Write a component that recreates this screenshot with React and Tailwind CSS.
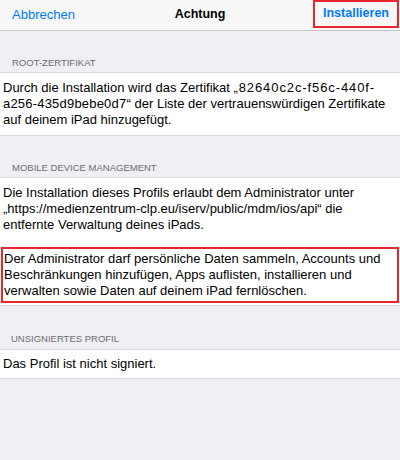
export default function App() {
  return (
    <div className="h-[460px] w-full overflow-hidden bg-[#efeff4] font-['Liberation_Sans',Arial,sans-serif] text-black">
      {/* nav bar */}
      <div className="relative flex h-[31px] items-start border-b border-[#c8c7cc] bg-[#f7f7f7]">
        <button className="pl-[12px] pt-[7px] text-[13px] leading-[15px] text-[#007aff]">
          Abbrechen
        </button>
        <div className="absolute left-0 right-0 top-[7px] text-center text-[12.5px] font-bold leading-[15px]">
          Achtung
        </div>
        <button className="ml-auto mr-[1px] flex h-[28px] w-[86px] items-center justify-center border-2 border-[#e8262d] pb-[1px] text-[12.5px] font-bold text-[#007aff]">
          Installieren
        </button>
      </div>

      {/* root-zertifikat */}
      <div className="flex h-[41px] items-end px-[12px] pb-[4px] text-[9.5px] uppercase leading-[11px] text-[#6d6d72]">
        Root-Zertifikat
      </div>
      <div className="whitespace-nowrap border-y border-[#dcdce0] bg-white px-[3px] pb-[7px] pt-[7px] text-[13px] leading-[16px]">
        Durch die Installation wird das Zertifikat{" "}
        <span className="tracking-[0.9px]">„82640c2c-f56c-440f-</span>
        <br />
        <span className="tracking-[0.2px]">a256-435d9bebe0d7“</span> der Liste der vertrauenswürdigen Zertifikate
        <br />
        auf deinem iPad hinzugefügt.
      </div>

      {/* mdm */}
      <div className="flex h-[41px] items-end px-[12px] pb-[4px] text-[9.5px] uppercase leading-[11px] text-[#6d6d72]">
        Mobile Device Management
      </div>
      <div className="whitespace-nowrap border-y border-[#dcdce0] bg-white pb-[2px] pt-[7px] text-[13px] leading-[16px]">
        <p className="px-[3px]">
          Die Installation dieses Profils erlaubt dem Administrator unter
          <br />
          „https://medienzentrum-clp.eu/iserv/public/mdm/ios/api“ die
          <br />
          entfernte Verwaltung deines iPads.
        </p>
        <p className="mx-[1px] mt-[14px] border-2 border-[#e8262d] py-[2px] pl-[1px]">
          Der Administrator darf persönliche Daten sammeln, Accounts und
          <br />
          Beschränkungen hinzufügen, Apps auflisten, installieren und
          <br />
          verwalten sowie Daten auf deinem iPad fernlöschen.
        </p>
      </div>

      {/* unsigniert */}
      <div className="flex h-[43px] items-end px-[11px] pb-[5px] text-[9.5px] uppercase leading-[11px] text-[#6d6d72]">
        Unsigniertes Profil
      </div>
      <div className="border-y border-[#dcdce0] bg-white px-[3px] py-[6px] text-[13px] leading-[16px]">
        Das Profil ist nicht signiert.
      </div>
    </div>
  );
}
